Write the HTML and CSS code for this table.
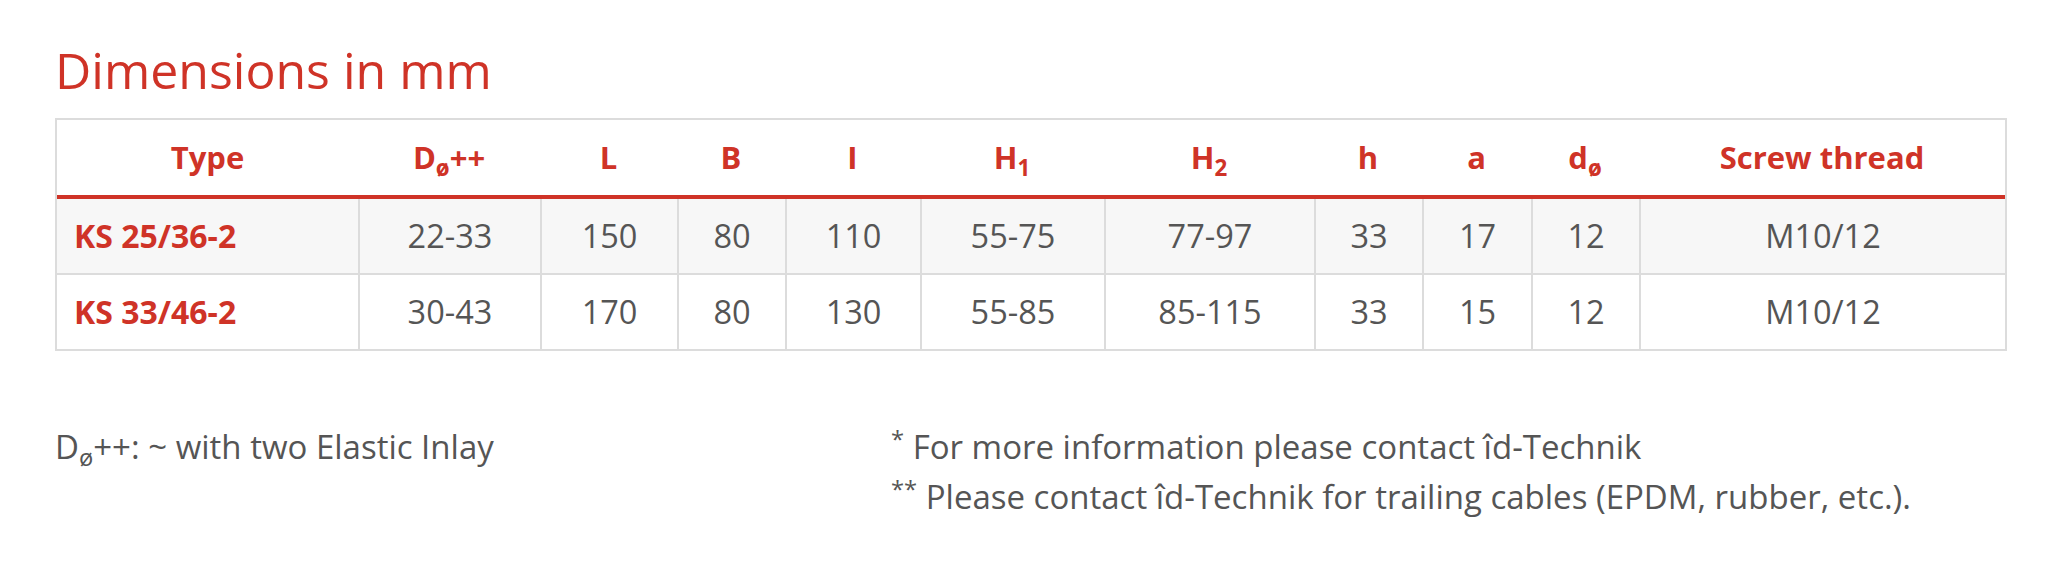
FILE: index.html
```html
<!DOCTYPE html>
<html lang="en">
<head>
<meta charset="utf-8">
<title>Dimensions in mm</title>
<link rel="stylesheet" href="styles.css">
</head>
<body>
<main class="page">
  <h2 class="title">Dimensions in mm</h2>
  <table class="dims">
    <thead>
      <tr>
        <th class="c-type">Type</th>
        <th class="c-d">D<sub>ø</sub>++</th>
        <th class="c-l">L</th>
        <th class="c-b">B</th>
        <th class="c-i">I</th>
        <th class="c-h1">H<sub>1</sub></th>
        <th class="c-h2">H<sub>2</sub></th>
        <th class="c-h">h</th>
        <th class="c-a">a</th>
        <th class="c-dd">d<sub>ø</sub></th>
        <th class="c-screw">Screw thread</th>
      </tr>
    </thead>
    <tbody>
      <tr class="alt">
        <td class="type">KS 25/36-2</td>
        <td>22-33</td>
        <td>150</td>
        <td>80</td>
        <td>110</td>
        <td>55-75</td>
        <td>77-97</td>
        <td>33</td>
        <td>17</td>
        <td>12</td>
        <td>M10/12</td>
      </tr>
      <tr>
        <td class="type">KS 33/46-2</td>
        <td>30-43</td>
        <td>170</td>
        <td>80</td>
        <td>130</td>
        <td>55-85</td>
        <td>85-115</td>
        <td>33</td>
        <td>15</td>
        <td>12</td>
        <td>M10/12</td>
      </tr>
    </tbody>
  </table>
  <div class="notes">
    <p class="note">D<sub>ø</sub>++: ~ with two Elastic Inlay</p>
    <div class="note-list">
      <p class="note"><sup>*</sup> For more information please contact îd-Technik</p>
      <p class="note"><sup>**</sup> Please contact îd-Technik for trailing cables (EPDM, rubber, etc.).</p>
    </div>
  </div>
</main>
</body>
</html>
```

FILE: styles.css
```css
html, body {
  margin: 0;
  padding: 0;
  background: #ffffff;
}

body {
  font-family: "Open Sans", "Liberation Sans", sans-serif;
  color: #555555;
}

.page {
  padding: 40px 59px 0 55px;
}

.title {
  margin: 0;
  font-size: 50px;
  line-height: 60px;
  font-weight: 400;
  color: #cf3327;
}

.dims {
  margin-top: 18px;
  width: 1952px;
  table-layout: fixed;
  border-collapse: separate;
  border-spacing: 0;
  border: 2px solid #dcdcdc;
}

.dims th,
.dims td {
  padding: 0;
  text-align: center;
  vertical-align: middle;
  white-space: nowrap;
}

.dims th {
  font-size: 31px;
  font-weight: 700;
  line-height: 75px;
  color: #cf3327;
  border-bottom: 4px solid #cf3327;
}

.dims td {
  font-size: 32.5px;
  font-weight: 400;
  line-height: 74px;
  color: #555555;
  border-left: 2px solid #dcdcdc;
}

.dims td.type {
  border-left: 0;
  text-align: left;
  padding-left: 17px;
  font-size: 32px;
  font-weight: 700;
  color: #cf3327;
}

.dims tr.alt td {
  background: #f7f7f7;
  border-bottom: 2px solid #dcdcdc;
}

.dims sub {
  font-size: 0.72em;
  line-height: 0;
  vertical-align: -0.3em;
}

.c-type { width: 301px; }
.c-d { width: 182px; }
.c-l { width: 137px; }
.c-b { width: 108px; }
.c-i { width: 135px; }
.c-h1 { width: 184px; }
.c-h2 { width: 210px; }
.c-h { width: 108px; }
.c-a { width: 109px; }
.c-dd { width: 108px; }
.c-screw { width: 366px; }

.notes {
  margin-top: 71px;
  display: grid;
  grid-template-columns: 836px 1fr;
}

.note {
  margin: 0;
  font-size: 33px;
  line-height: 50px;
  color: #555555;
}

.note sub {
  font-size: 0.72em;
  line-height: 0;
  vertical-align: -0.3em;
}

.note sup {
  font-size: 0.72em;
  line-height: 0;
  vertical-align: 0.45em;
}
```
